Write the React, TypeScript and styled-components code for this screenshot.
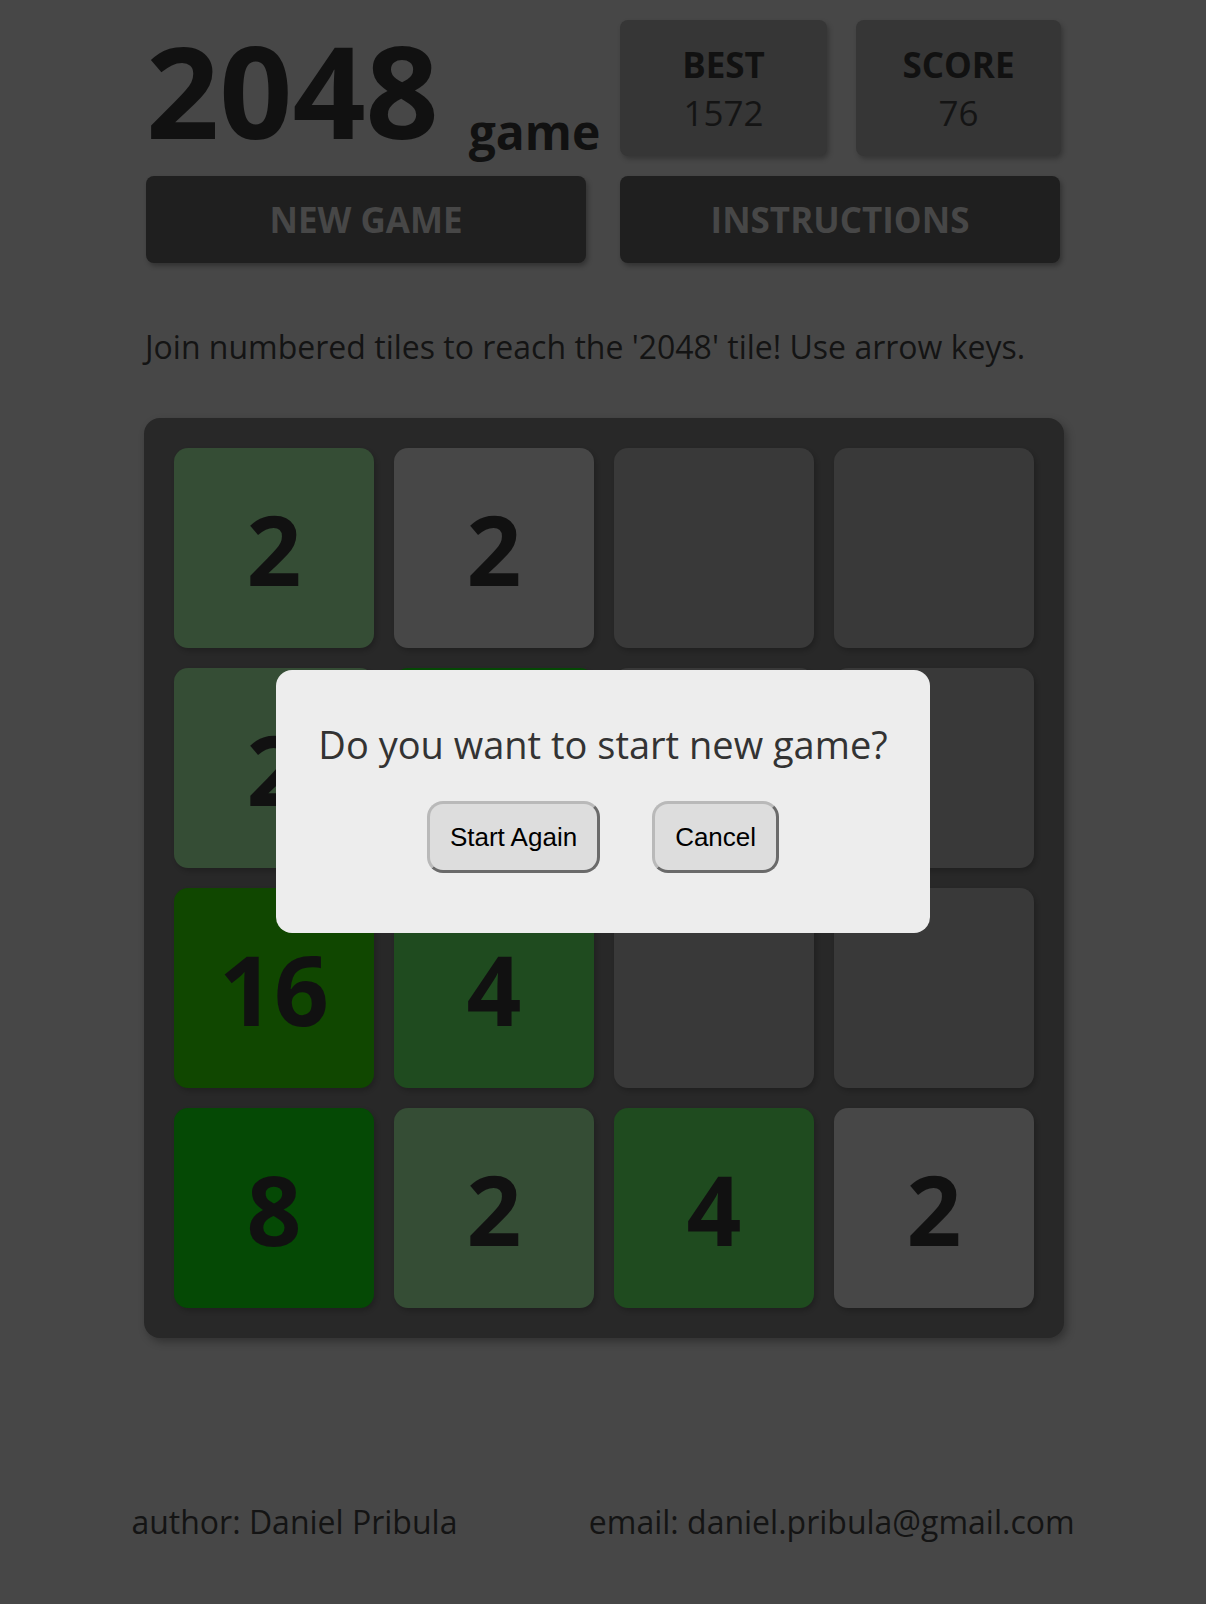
import React from "react";
import styled, { createGlobalStyle } from "styled-components";

const GlobalStyle = createGlobalStyle`
  html, body {
    margin: 0;
    padding: 0;
    background: #474747;
    font-family: "Open Sans", "Liberation Sans", sans-serif;
    color: #111111;
  }
  * { box-sizing: border-box; }
`;

const Page = styled.div`
  min-height: 1604px;
  display: flex;
  flex-direction: column;
  align-items: center;
  padding-top: 20px;
`;

const Header = styled.header`
  width: 914px;
  display: grid;
  grid-template-columns: 440px 440px;
  column-gap: 34px;
  row-gap: 20px;
`;

const TitleRow = styled.div`
  height: 136px;
  display: flex;
  align-items: flex-end;
`;

const Title = styled.h1`
  margin: 0 0 2px 0;
  font-size: 128px;
  line-height: 1;
  font-weight: 700;
  color: #111111;
`;

const Subtitle = styled.span`
  margin-left: 30px;
  font-size: 48px;
  line-height: 1;
  font-weight: 700;
  color: #111111;
`;

const Scores = styled.div`
  display: grid;
  grid-template-columns: 207px 205px;
  column-gap: 29px;
`;

const ScoreBox = styled.div`
  height: 136px;
  padding: 21px 0 19px;
  background: #363636;
  border-radius: 8px;
  box-shadow: 2px 3px 5px rgba(0, 0, 0, 0.25);
  display: flex;
  flex-direction: column;
  align-items: center;
`;

const ScoreLabel = styled.div`
  font-size: 35px;
  line-height: 48px;
  font-weight: 700;
  color: #111111;
`;

const ScoreValue = styled.div`
  font-size: 35px;
  line-height: 48px;
  font-weight: 400;
  color: #141414;
`;

const ActionButton = styled.button`
  height: 87px;
  border: none;
  border-radius: 8px;
  background: #1f1f1f;
  color: #474747;
  font-family: "Open Sans", "Liberation Sans", sans-serif;
  font-size: 35px;
  font-weight: 700;
  box-shadow: 2px 3px 5px rgba(0, 0, 0, 0.3);
  padding: 0;
`;

const Intro = styled.p`
  width: 920px;
  margin: 61px 0 0 0;
  padding-left: 2px;
  font-size: 32px;
  line-height: 46px;
  font-weight: 400;
  color: #141414;
`;

const Board = styled.div`
  margin-top: 48px;
  margin-left: 2px;
  width: 920px;
  height: 920px;
  padding: 30px;
  background: #282828;
  border-radius: 16px;
  box-shadow: 3px 4px 8px rgba(0, 0, 0, 0.3);
  display: grid;
  grid-template-columns: repeat(4, 200px);
  grid-template-rows: repeat(4, 200px);
  gap: 20px;
`;

const Tile = styled.div<{ $bg: string }>`
  background: ${(p) => p.$bg};
  border-radius: 14px;
  box-shadow: 2px 3px 5px rgba(0, 0, 0, 0.2);
  display: flex;
  align-items: center;
  justify-content: center;
  font-size: 96px;
  font-weight: 700;
  line-height: 1;
  color: #111111;
  padding-top: 2px;
`;

const Footer = styled.footer`
  width: 100%;
  margin-top: 162px;
  display: flex;
  justify-content: space-evenly;
  font-size: 32px;
  line-height: 44px;
  font-weight: 400;
  color: #141414;
`;

const Modal = styled.div`
  position: fixed;
  left: 50%;
  top: 670px;
  transform: translateX(-50%);
  width: 654px;
  height: 263px;
  background: #ededed;
  border-radius: 16px;
  display: flex;
  flex-direction: column;
  align-items: center;
  padding-top: 49px;
`;

const ModalText = styled.p`
  margin: 0;
  font-size: 38px;
  line-height: 50px;
  font-weight: 400;
  color: #333333;
`;

const ModalButtons = styled.div`
  margin-top: 32px;
  display: flex;
  gap: 52px;
`;

const ModalButton = styled.button`
  font-family: "Liberation Sans", Arial, sans-serif;
  font-size: 26px;
  line-height: 30px;
  color: #000000;
  background: #dddddd;
  padding: 18px 20px;
  border: 3px solid;
  border-color: #b9b9b9 #6a6a6a #6a6a6a #b9b9b9;
  border-radius: 16px;
`;

const EMPTY = "#393939";
const colors: Record<string, string> = {
  g2: "#354d35",
  s2: "#474747",
  "4": "#1f4b1f",
  "8": "#054905",
  "16": "#104700",
};

type Cell = { v: string; c: string };
const cells: Cell[] = [
  { v: "2", c: colors.g2 },
  { v: "2", c: colors.s2 },
  { v: "", c: EMPTY },
  { v: "", c: EMPTY },
  { v: "2", c: colors.g2 },
  { v: "8", c: colors["8"] },
  { v: "", c: EMPTY },
  { v: "", c: EMPTY },
  { v: "16", c: colors["16"] },
  { v: "4", c: colors["4"] },
  { v: "", c: EMPTY },
  { v: "", c: EMPTY },
  { v: "8", c: colors["8"] },
  { v: "2", c: colors.g2 },
  { v: "4", c: colors["4"] },
  { v: "2", c: colors.s2 },
];

export default function App() {
  return (
    <>
      <GlobalStyle />
      <Page>
        <Header>
          <TitleRow>
            <Title>2048</Title>
            <Subtitle>game</Subtitle>
          </TitleRow>
          <Scores>
            <ScoreBox>
              <ScoreLabel>BEST</ScoreLabel>
              <ScoreValue>1572</ScoreValue>
            </ScoreBox>
            <ScoreBox>
              <ScoreLabel>SCORE</ScoreLabel>
              <ScoreValue>76</ScoreValue>
            </ScoreBox>
          </Scores>
          <ActionButton>NEW GAME</ActionButton>
          <ActionButton>INSTRUCTIONS</ActionButton>
        </Header>
        <Intro>Join numbered tiles to reach the '2048' tile! Use arrow keys.</Intro>
        <Board>
          {cells.map((cell, i) => (
            <Tile key={i} $bg={cell.c}>
              {cell.v}
            </Tile>
          ))}
        </Board>
        <Footer>
          <span>author: Daniel Pribula</span>
          <span>email: daniel.pribula@gmail.com</span>
        </Footer>
      </Page>
      <Modal>
        <ModalText>Do you want to start new game?</ModalText>
        <ModalButtons>
          <ModalButton>Start Again</ModalButton>
          <ModalButton>Cancel</ModalButton>
        </ModalButtons>
      </Modal>
    </>
  );
}
